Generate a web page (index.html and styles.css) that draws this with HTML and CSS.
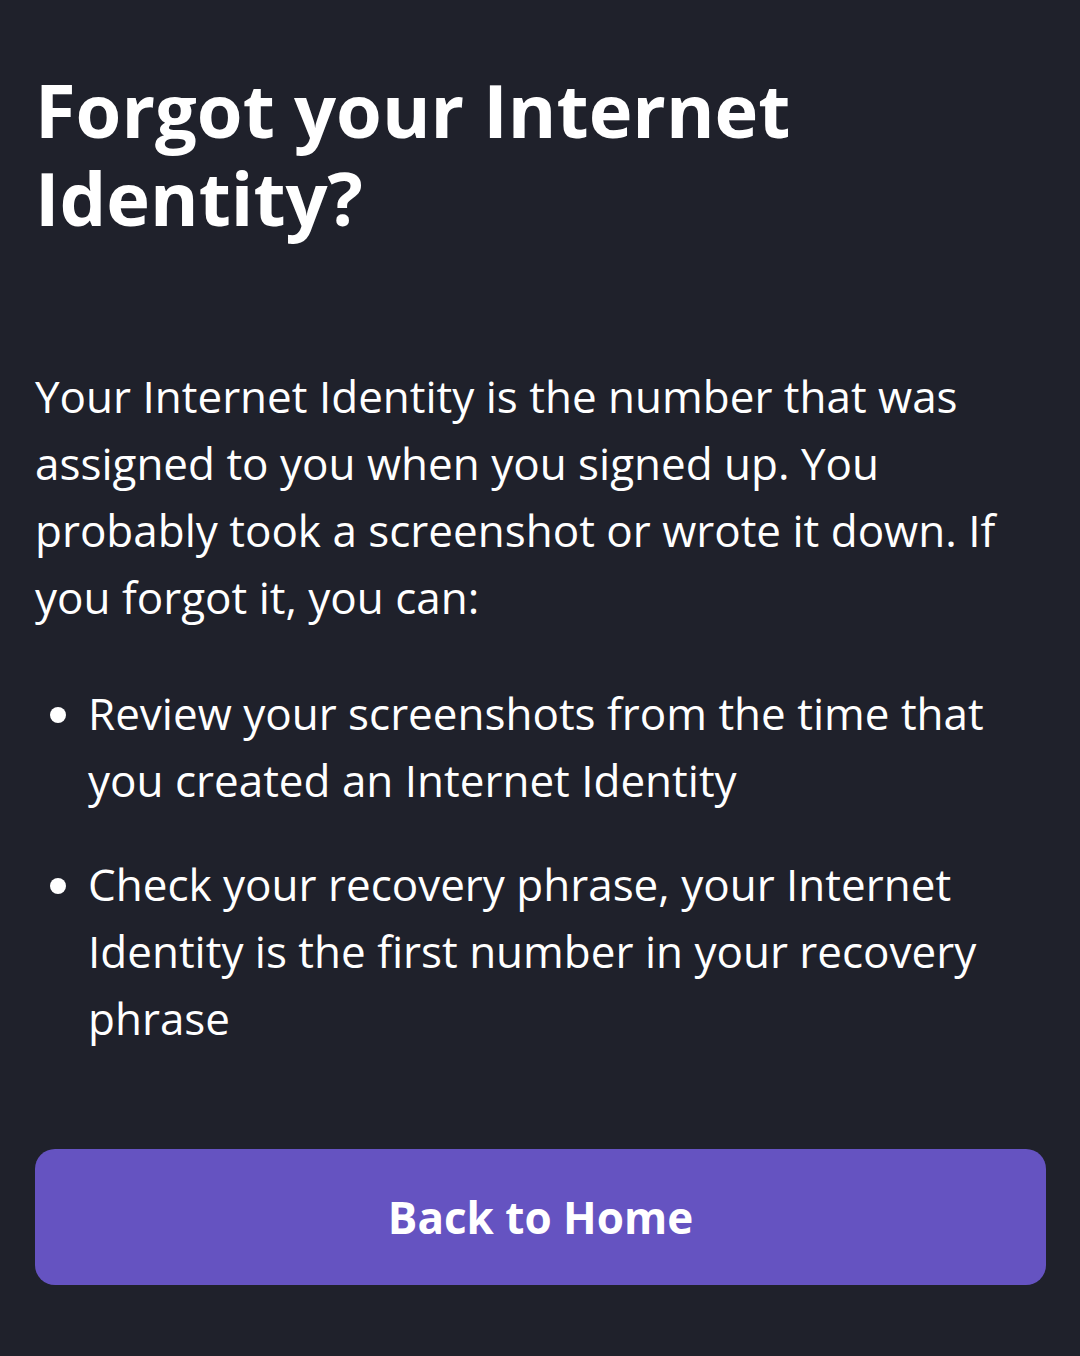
FILE: index.html
```html
<!DOCTYPE html>
<html lang="en">
<head>
    <meta charset="UTF-8">
    <meta name="viewport" content="width=device-width, initial-scale=1.0">
    <title>Forgot your Internet Identity?</title>
    <link rel="stylesheet" href="styles.css">
</head>
<body>
    <div class="container">
        <h1>Forgot your Internet Identity?</h1>
        <p class="intro">Your Internet Identity is the number that was assigned to you when you signed up. You probably took a screenshot or wrote it down. If you forgot it, you can:</p>
        <ul class="tips">
            <li>Review your screenshots from the time that you created an Internet Identity</li>
            <li>Check your recovery phrase, your Internet Identity is the first number in your recovery phrase</li>
        </ul>
        <button class="btn-home">Back to Home</button>
    </div>
</body>
</html>
```

FILE: styles.css
```css
/* Pantalla de recuperación */
body {
    margin: 0;
    background-color: #1f212b;
    color: #fff;
    font-family: "Open Sans", Lato, sans-serif;
}
.container {
    padding: 66px 34px 0 35px;
}
h1 {
    margin: 0;
    font-size: 74px;
    line-height: 88px;
    font-weight: 700;
    width: 820px;
}
.intro {
    margin: 121px 0 0;
    font-size: 44px;
    line-height: 67px;
}
.tips {
    margin: 49px 0 0;
    padding-left: 53px;
    font-size: 44px;
    line-height: 67px;
}
.tips li + li {
    margin-top: 37px;
}
.btn-home {
    display: block;
    width: 100%;
    height: 136px;
    margin-top: 97px;
    background-color: #6553c1;
    color: #fff;
    border: none;
    border-radius: 20px;
    font-family: inherit;
    font-size: 44px;
    font-weight: 700;
    cursor: pointer;
}
```
